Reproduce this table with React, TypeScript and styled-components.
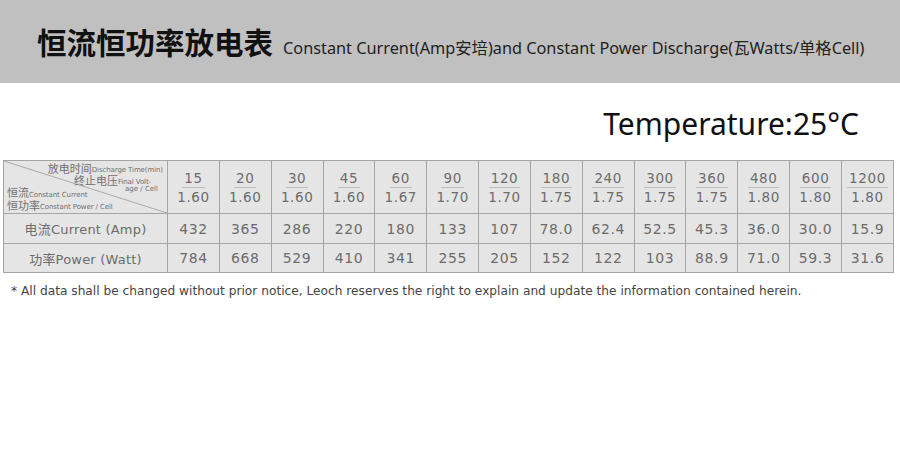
import React from "react";
import styled, { createGlobalStyle } from "styled-components";

const GlobalStyle = createGlobalStyle`
  html, body {
    margin: 0;
    padding: 0;
    background: #ffffff;
  }
  body {
    width: 900px;
    height: 475px;
    overflow: hidden;
    font-family: "Noto Sans", "Noto Sans CJK SC", sans-serif;
  }
`;

const Banner = styled.header`
  height: 83px;
  background: #c0c0c0;
  display: flex;
  align-items: baseline;
  padding: 23px 0 0 37px;
  box-sizing: border-box;
  gap: 10px;
`;

const Title = styled.h1`
  margin: 0;
  font-family: "Noto Sans CJK SC", sans-serif;
  font-weight: 700;
  font-size: 29.5px;
  line-height: 36px;
  color: #111;
`;

const Subtitle = styled.span`
  font-family: "Noto Sans", "Noto Sans CJK SC", sans-serif;
  font-size: 16.3px;
  color: #222;
`;

const Temperature = styled.div`
  text-align: right;
  padding-right: 41px;
  margin-top: 19px;
  height: 58px;
  font-family: "Noto Sans", sans-serif;
  font-size: 30px;
  line-height: 44px;
  color: #111;
`;

const Table = styled.table`
  margin-left: 3px;
  width: 891px;
  border-collapse: collapse;
  table-layout: fixed;
  background: #e5e5e5;
  font-family: "DejaVu Sans", "Noto Sans CJK SC", sans-serif;
  color: #6c6c6c;

  td {
    border: 1px solid #a5a5a5;
    padding: 0;
    text-align: center;
  }
`;

const Row = styled.tr<{ $h: number }>`
  height: ${(p) => p.$h}px;
`;

const Num = styled.td`
  font-size: 14px;
  letter-spacing: 0.6px;
`;

const Label = styled.td`
  font-size: 13px;
  letter-spacing: 0.2px;
`;

const Fraction = styled.div`
  display: flex;
  flex-direction: column;
  align-items: center;
  font-size: 13.5px;
  letter-spacing: 0.6px;
  line-height: 16px;

  span:first-child {
    border-bottom: 1px solid #bdbdbd;
    padding: 0 2px 1px;
    margin-bottom: 1px;
  }
`;

const CornerCell = styled.td`
  position: relative;
  height: 52px;
`;

const Diagonal = styled.svg`
  position: absolute;
  inset: 0;
  width: 100%;
  height: 100%;
`;

const CornerText = styled.div`
  position: relative;
  display: flex;
  flex-direction: column;
  height: 50px;
  padding: 2px 4px 0 3px;
  box-sizing: border-box;
  font-size: 11px;
  line-height: 12px;
  color: #707070;
  overflow: hidden;
`;

const Line = styled.div<{ $left?: boolean; $indent?: number }>`
  display: flex;
  justify-content: ${(p) => (p.$left ? "flex-start" : "flex-end")};
  padding-right: ${(p) => p.$indent ?? 0}px;
  white-space: nowrap;
`;

const SplitLine = styled.div`
  display: flex;
  justify-content: space-between;
  align-items: flex-start;
  white-space: nowrap;
`;

const Raised = styled.span`
  font-size: 7px;
  line-height: 8px;
  margin-top: -3px;
  padding-right: 5px;
`;

const Tiny = styled.span`
  font-size: 7px;
  letter-spacing: -0.1px;
`;

const Note = styled.p`
  margin: 11px 0 0 11px;
  font-family: "DejaVu Sans", sans-serif;
  font-size: 12.2px;
  color: #444;
`;

const cols = [
  ["15", "1.60"],
  ["20", "1.60"],
  ["30", "1.60"],
  ["45", "1.60"],
  ["60", "1.67"],
  ["90", "1.70"],
  ["120", "1.70"],
  ["180", "1.75"],
  ["240", "1.75"],
  ["300", "1.75"],
  ["360", "1.75"],
  ["480", "1.80"],
  ["600", "1.80"],
  ["1200", "1.80"],
];

const current = ["432", "365", "286", "220", "180", "133", "107", "78.0", "62.4", "52.5", "45.3", "36.0", "30.0", "15.9"];
const power = ["784", "668", "529", "410", "341", "255", "205", "152", "122", "103", "88.9", "71.0", "59.3", "31.6"];

const App: React.FC = () => {
  return (
    <>
      <GlobalStyle />
      <Banner>
        <Title>恒流恒功率放电表</Title>
        <Subtitle>Constant Current(Amp安培)and Constant Power Discharge(瓦Watts/单格Cell)</Subtitle>
      </Banner>
      <Temperature>Temperature:25°C</Temperature>
      <Table>
        <colgroup>
          <col style={{ width: 164 }} />
          {cols.map((c) => (
            <col key={c[0]} />
          ))}
        </colgroup>
        <tbody>
          <Row $h={52}>
            <CornerCell>
              <Diagonal viewBox="0 0 164 52" preserveAspectRatio="none">
                <line x1="0" y1="0" x2="164" y2="52" stroke="#9a9a9a" strokeWidth="0.8" />
              </Diagonal>
              <CornerText>
                <Line>
                  放电时间<Tiny>Discharge Time(min)</Tiny>
                </Line>
                <Line $indent={12}>
                  终止电压<Tiny>Final Volt-</Tiny>
                </Line>
                <SplitLine>
                  <span>
                    恒流<Tiny>Constant Current</Tiny>
                  </span>
                  <Raised>age / Cell</Raised>
                </SplitLine>
                <Line $left>
                  恒功率<Tiny>Constant Power / Cell</Tiny>
                </Line>
              </CornerText>
            </CornerCell>
            {cols.map(([t, v]) => (
              <Num key={t}>
                <Fraction>
                  <span>{t}</span>
                  <span>{v}</span>
                </Fraction>
              </Num>
            ))}
          </Row>
          <Row $h={30}>
            <Label>电流Current (Amp)</Label>
            {current.map((v, i) => (
              <Num key={i}>{v}</Num>
            ))}
          </Row>
          <Row $h={29}>
            <Label>功率Power (Watt)</Label>
            {power.map((v, i) => (
              <Num key={i}>{v}</Num>
            ))}
          </Row>
        </tbody>
      </Table>
      <Note>* All data shall be changed without prior notice, Leoch reserves the right to explain and update the information contained herein.</Note>
    </>
  );
};

export default App;
